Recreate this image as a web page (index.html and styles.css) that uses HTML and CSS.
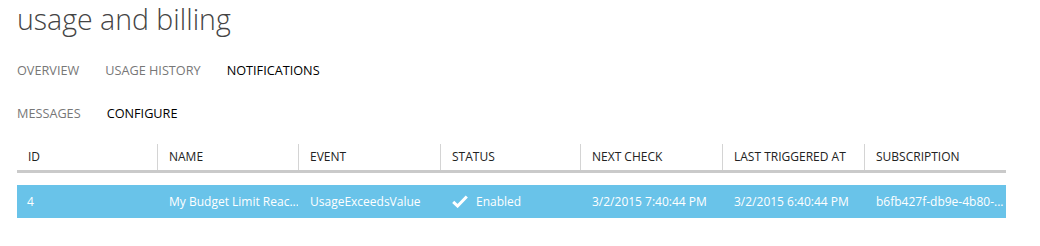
FILE: index.html
```html
<!DOCTYPE html>
<html>
<head>
<meta charset="utf-8">
<title>usage and billing</title>
<link rel="stylesheet" href="styles.css">
</head>
<body>
<div class="page">
	<h1 class="title">usage and billing</h1>
	<ul class="tabs">
		<li><a>OVERVIEW</a></li>
		<li><a>USAGE HISTORY</a></li>
		<li><a class="active">NOTIFICATIONS</a></li>
	</ul>
	<ul class="tabs sub">
		<li><a>MESSAGES</a></li>
		<li><a class="active">CONFIGURE</a></li>
	</ul>
	<div class="grid">
		<div class="head">
			<div class="cell">ID</div>
			<div class="cell">NAME</div>
			<div class="cell">EVENT</div>
			<div class="cell">STATUS</div>
			<div class="cell">NEXT CHECK</div>
			<div class="cell">LAST TRIGGERED AT</div>
			<div class="cell">SUBSCRIPTION</div>
		</div>
		<div class="row selected">
			<div class="cell">4</div>
			<div class="cell">My Budget Limit Reac...</div>
			<div class="cell">UsageExceedsValue</div>
			<div class="cell status">
				<svg class="check" width="16" height="13" viewBox="0 0 16 13"><path d="M1.2 6.8 L5.6 11 L14.8 1.5" fill="none" stroke="#fff" stroke-width="3"/></svg>
				<span>Enabled</span>
			</div>
			<div class="cell">3/2/2015 7:40:44 PM</div>
			<div class="cell">3/2/2015 6:40:44 PM</div>
			<div class="cell">b6fb427f-db9e-4b80-...</div>
		</div>
	</div>
</div>
</body>
</html>
```
FILE: styles.css
```css
body{
	margin:0;
	background:#fff;
	font-family:"Open Sans","Noto Sans","Liberation Sans",sans-serif;
	color:#333;
}
.page{
	padding:0 0 0 17px;
	width:989px;
}
.title{
	margin:0;
	padding-top:0;
	font-size:28.5px;
	font-weight:300;
	line-height:38px;
	color:#444;
	letter-spacing:0;
}
.tabs{
	list-style:none;
	margin:0;
	padding:0;
	display:flex;
	gap:26px;
	margin-top:20px;
	height:20px;
}
.tabs.sub{
	margin-top:23px;
}
.tabs a{
	font-size:12.7px;
	line-height:20px;
	color:#777;
}
.tabs a.active{
	color:#000;
}
.grid{
	margin-top:23px;
}
.head,.row{
	display:grid;
	grid-template-columns:140px 141px 142px 140px 142px 142px 142px;
}
.head{
	border-bottom:3px solid #cacaca;
}
.head .cell{
	height:26px;
	line-height:26px;
	font-size:12px;
	color:#222;
	padding-left:11px;
}
.head .cell+.cell{
	border-left:1px solid #d4d4d4;
}
.row{
	margin-top:12px;
	background:#69c3e9;
}
.row .cell{
	height:33px;
	line-height:33px;
	font-size:12px;
	color:#fff;
	padding-left:12px;
	white-space:nowrap;
	overflow:hidden;
}
.row .cell:first-child{
	padding-left:10px;
}
.row .status{
	display:flex;
	align-items:center;
	gap:8px;
}
.check{
	display:block;
}
```
